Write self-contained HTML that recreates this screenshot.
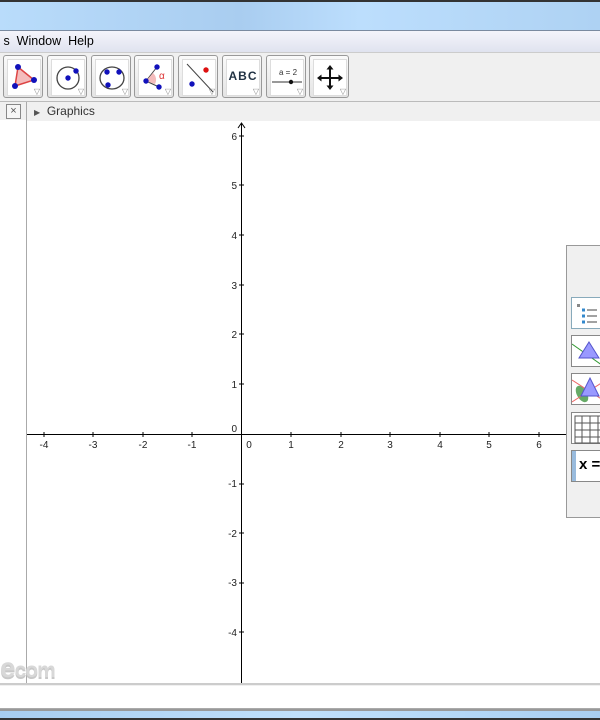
<!DOCTYPE html><html><head><style>
body{margin:0;width:600px;height:720px;overflow:hidden;background:#f0f0f0;font-family:"Liberation Sans",sans-serif;position:relative}
.a{position:absolute}
.btn{position:absolute;top:55px;width:40px;height:43px;border:1px solid #999;border-radius:3px;background:linear-gradient(#fafafa,#e4e4e4);box-sizing:border-box}
.btn .in{position:absolute;left:3px;top:3px;width:32px;height:35px;background:#fff;border:1px solid #ddd}
.btn .tri{position:absolute;right:2px;bottom:1px;font-size:8px;color:#888}
.rb{position:absolute;left:571px;width:34px;height:32px;border:1px solid #888;background:#fff;box-sizing:border-box}
</style></head><body>
<div class="a" style="left:0;top:0;width:600px;height:2px;background:#333"></div>
<div class="a" style="left:0;top:2px;width:600px;height:28px;background:linear-gradient(90deg,#b9dcfb,#a9cdf0 40%,#bcdefd 60%,#aed2f3)"></div>
<div class="a" style="left:0;top:30px;width:600px;height:1px;background:#7a8aa0"></div>
<div class="a" style="left:0;top:31px;width:600px;height:21px;background:linear-gradient(#f4f4fb,#e0e3ef);font-size:12.5px;line-height:21px">&nbsp;s&nbsp; Window&nbsp; Help</div>
<div class="a" style="left:0;top:52px;width:600px;height:49px;background:#f0f0f0;border-top:1px solid #ccc"></div>
<div class="btn" style="left:3px"><div class="in"><svg width="32" height="35"><polygon points="10,7 26,20 7,26" fill="#f4bcbc" stroke="#d44" stroke-width="1.5"/><circle cx="10" cy="7" r="3" fill="#11b"/><circle cx="26" cy="20" r="3" fill="#11b"/><circle cx="7" cy="26" r="3" fill="#11b"/></svg></div><span class="tri">▽</span></div>
<div class="btn" style="left:47px"><div class="in"><svg width="32" height="35"><circle cx="16" cy="18" r="11" fill="none" stroke="#444" stroke-width="1.3"/><circle cx="16" cy="18" r="2.7" fill="#11b"/><circle cx="24" cy="11" r="2.7" fill="#11b"/></svg></div><span class="tri">▽</span></div>
<div class="btn" style="left:91px"><div class="in"><svg width="32" height="35"><ellipse cx="16" cy="18" rx="12" ry="11" fill="none" stroke="#444" stroke-width="1.3"/><circle cx="11" cy="12" r="2.7" fill="#11b"/><circle cx="23" cy="12" r="2.7" fill="#11b"/><circle cx="12" cy="25" r="2.7" fill="#11b"/></svg></div><span class="tri">▽</span></div>
<div class="btn" style="left:134px"><div class="in"><svg width="32" height="35"><path d="M7 21L18 7M7 21L20 27" stroke="#444" fill="none"/><path d="M7 21L14 13A9 9 0 0 1 16 24Z" fill="#f4bcbc"/><text x="20" y="19" font-size="10" fill="#d33">α</text><circle cx="7" cy="21" r="2.7" fill="#11b"/><circle cx="18" cy="7" r="2.7" fill="#11b"/><circle cx="20" cy="27" r="2.7" fill="#11b"/></svg></div><span class="tri">▽</span></div>
<div class="btn" style="left:178px"><div class="in"><svg width="32" height="35"><path d="M4 4L30 32" stroke="#444"/><circle cx="23" cy="10" r="2.7" fill="#d11"/><circle cx="9" cy="24" r="2.7" fill="#11b"/></svg></div><span class="tri">▽</span></div>
<div class="btn" style="left:222px"><div class="in"><div style="font-size:12px;color:#234;font-weight:bold;letter-spacing:1px;margin-top:9px;text-align:center">ABC</div></div><span class="tri">▽</span></div>
<div class="btn" style="left:266px"><div class="in"><svg width="32" height="35"><text x="8" y="15" font-size="8" fill="#333">a = 2</text><path d="M1 22H31" stroke="#333"/><circle cx="20" cy="22" r="2.2" fill="#111"/></svg></div><span class="tri">▽</span></div>
<div class="btn" style="left:309px"><div class="in"><svg width="32" height="35"><path d="M16 8V27M6 18H26" stroke="#111" stroke-width="2"/><path d="M16 5l-3.5 4.5h7zM16 30l-3.5-4.5h7zM3 18l4.5-3.5v7zM29 18l-4.5-3.5v7z" fill="#111"/></svg></div><span class="tri">▽</span></div>
<div class="a" style="left:0;top:101px;width:600px;height:1px;background:#bbb"></div>
<div class="a" style="left:6px;top:104px;width:13px;height:13px;border:1px solid #888;font-size:11px;line-height:12px;text-align:center;color:#555;background:#f6f6f6">×</div>
<div class="a" style="left:26px;top:102px;width:1px;height:582px;background:#aaa"></div>
<div class="a" style="left:0;top:120px;width:26px;height:564px;background:#fff"></div>
<div class="a" style="left:34px;top:104px;font-size:12px;color:#333"><span style="font-size:8px;color:#555">▶</span>&nbsp; Graphics</div>
<svg class="a" style="left:27px;top:121px" width="573" height="562">
<rect width="573" height="562" fill="#fff"/>
<g stroke="#000" stroke-width="1">
<path d="M0 313.5H573M214.5 562V3"/><path d="M211 7L214.5 2L218 7" fill="none"/>
</g>
<g font-size="10" fill="#222" text-anchor="middle">
<text x="17" y="327">-4</text><text x="66" y="327">-3</text><text x="116" y="327">-2</text><text x="165" y="327">-1</text><text x="222" y="327">0</text><text x="264" y="327">1</text><text x="314" y="327">2</text><text x="363" y="327">3</text><text x="413" y="327">4</text><text x="462" y="327">5</text><text x="512" y="327">6</text>
</g>
<g font-size="10" fill="#222" text-anchor="end">
<text x="210" y="19">6</text><text x="210" y="68">5</text><text x="210" y="118">4</text><text x="210" y="168">3</text><text x="210" y="217">2</text><text x="210" y="267">1</text><text x="210" y="311">0</text><text x="210" y="366">-1</text><text x="210" y="416">-2</text><text x="210" y="465">-3</text><text x="210" y="515">-4</text>
</g>
<g stroke="#000"><path d="M17 311v5M66 311v5M116 311v5M165 311v5M264 311v5M314 311v5M363 311v5M413 311v5M462 311v5M512 311v5M212 15h5M212 64h5M212 114h5M212 164h5M212 213h5M212 263h5M212 363h5M212 412h5M212 462h5M212 511h5"/></g>
</svg>
<div class="a" style="left:566px;top:245px;width:40px;height:271px;background:#f0f0f0;border:1px solid #999"></div>
<div class="rb" style="top:297px;border-color:#8ab"><svg width="34" height="32"><rect x="5" y="6" width="3" height="3" fill="#888"/><path d="M10 12h3M10 18h3M10 24h3" stroke="#38c" stroke-width="3"/><path d="M15 12h10M15 18h10M15 24h10" stroke="#444"/></svg></div>
<div class="rb" style="top:335px"><svg width="34" height="32"><path d="M0 8L34 32" stroke="#393"/><polygon points="17,6 27,22 7,22" fill="#99f" stroke="#55c"/></svg></div>
<div class="rb" style="top:373px"><svg width="34" height="32"><ellipse cx="10" cy="20" rx="5" ry="9" fill="#6a6" transform="rotate(-30 10 20)"/><path d="M0 6L34 28M0 28L34 6" stroke="#e66"/><polygon points="18,4 27,22 9,22" fill="#99f" stroke="#55c"/></svg></div>
<div class="rb" style="top:412px"><svg width="34" height="32"><path d="M3 3h31v27H3z M3 10h31M3 17h31M3 24h31M10 3v27M18 3v27M26 3v27" stroke="#555" fill="none"/></svg></div>
<div class="rb" style="top:450px"><div style="position:absolute;left:0;top:0;width:4px;height:30px;background:#9bd"></div><span style="position:absolute;left:7px;top:5px;font-size:15px;font-weight:bold">x =</span></div>
<div class="a" style="left:0;top:683px;width:600px;height:2px;background:#ccc"></div>
<div class="a" style="left:0;top:686px;width:600px;height:22px;background:#fff;border-bottom:1px solid #aaa"></div>
<div class="a" style="left:0;top:709px;width:600px;height:2px;background:#999"></div>
<div class="a" style="left:0;top:711px;width:600px;height:7px;background:linear-gradient(90deg,#a7cdf0,#c0e0fb,#a9cff2)"></div>
<div class="a" style="left:0;top:718px;width:600px;height:2px;background:#333"></div>
<div class="a" style="left:0;top:652px;font-size:28px;font-weight:bold;color:#d8d8d8;letter-spacing:-1px;text-shadow:0 2px 0 #c8c8c8">e<span style="font-size:21px">com</span></div>
</body></html>
